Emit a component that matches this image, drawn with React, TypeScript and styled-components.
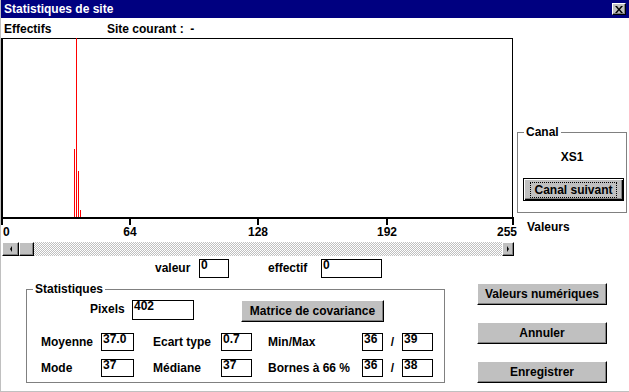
import React from 'react';
import styled, { createGlobalStyle } from 'styled-components';

const GlobalStyle = createGlobalStyle`
  html, body {
    margin: 0;
    padding: 0;
    background: #fff;
  }
  body {
    font-family: "Liberation Sans", Arial, sans-serif;
    font-size: 12px;
    font-weight: bold;
    color: #000;
  }
`;

const Window = styled.div`
  width: 629px;
  height: 392px;
  box-sizing: border-box;
  border-left: 1px solid #c0c0c0;
  border-bottom: 1px solid #c0c0c0;
  background: #fff;
  display: flex;
  flex-direction: column;
  overflow: hidden;
`;

const TitleBar = styled.div`
  height: 18px;
  flex: none;
  background: #000080;
  color: #fff;
  display: flex;
  align-items: center;
  justify-content: space-between;
  padding: 0 3px;
`;

const Title = styled.span`
  font-size: 12px;
  line-height: 14px;
`;

const CloseButton = styled.div`
  width: 14px;
  height: 12px;
  box-sizing: border-box;
  background: #c0c0c0;
  border: 1px solid;
  border-color: #fff #000 #000 #fff;
  box-shadow: inset -1px -1px #808080;
  display: flex;
  align-items: center;
  justify-content: center;
`;

const Header = styled.div`
  height: 20px;
  flex: none;
  box-sizing: border-box;
  padding: 4px 0 0 3px;
  line-height: 14px;
  display: flex;
  white-space: pre;
`;

const HeaderLabel = styled.span<{ $w?: number }>`
  width: ${p => (p.$w ? `${p.$w}px` : 'auto')};
`;

const Main = styled.div`
  height: 218px;
  flex: none;
  display: flex;
`;

const ChartCol = styled.div`
  width: 516px;
  display: flex;
  flex-direction: column;
`;

const ChartSvg = styled.svg`
  display: block;
  width: 516px;
  height: 204px;
  font-family: "Liberation Sans", Arial, sans-serif;
  font-size: 12px;
  font-weight: bold;
`;

const ScrollBar = styled.div`
  margin-left: 1px;
  width: 512px;
  height: 14px;
  display: flex;
  background: repeating-conic-gradient(#c0c0c0 0 25%, #fff 0 50%) 0 0 / 2px 2px;
`;

const ScrollPart = styled.div<{ $w: number; $push?: boolean }>`
  width: ${p => p.$w}px;
  height: 14px;
  box-sizing: border-box;
  background: #c0c0c0;
  border: 1px solid;
  border-color: #fff #000 #000 #fff;
  box-shadow: inset -1px -1px #808080;
  margin-left: ${p => (p.$push ? 'auto' : '0')};
  display: flex;
  align-items: center;
  justify-content: center;
`;

const Arrow = styled.span<{ $dir: 'left' | 'right' }>`
  width: 0;
  height: 0;
  border-top: 3px solid transparent;
  border-bottom: 3px solid transparent;
  ${p => (p.$dir === 'left' ? 'border-right: 2px solid #000;' : 'border-left: 2px solid #000;')}
`;

const SidePanel = styled.div`
  width: 110px;
  padding-top: 88px;
  display: flex;
  flex-direction: column;
`;

const GroupBox = styled.fieldset<{ $w: number; $ml?: number; $mt?: number }>`
  width: ${p => p.$w}px;
  box-sizing: border-box;
  margin: ${p => p.$mt ?? 0}px 0 0 ${p => p.$ml ?? 0}px;
  padding: 0;
  border: 1px solid #808080;
  min-width: 0;
`;

const GroupLabel = styled.legend`
  margin-left: 6px;
  padding: 0 2px;
  line-height: 12px;
  font-size: 12px;
`;

const CanalBody = styled.div`
  display: flex;
  flex-direction: column;
  padding: 12px 0 11px 5px;
`;

const ChannelName = styled.div`
  line-height: 14px;
  text-align: center;
  margin-left: -5px;
`;

const DefaultButton = styled.div`
  margin-top: 14px;
  width: 101px;
  height: 23px;
  box-sizing: border-box;
  background: #c0c0c0;
  border: 1px solid #000;
  box-shadow: inset 1px 1px #fff, inset -1px -1px #000, inset -2px -2px #808080;
  display: flex;
  align-items: center;
  justify-content: center;
`;

const FocusText = styled.span`
  outline: 1px dotted #000;
  outline-offset: 0;
  padding: 0 3px;
  line-height: 14px;
`;

const AxisName = styled.div`
  margin-top: 7px;
  padding-left: 10px;
  line-height: 14px;
`;

const Lower = styled.div`
  display: flex;
`;

const LeftLower = styled.div`
  width: 444px;
  display: flex;
  flex-direction: column;
`;

const ValueRow = styled.div`
  margin-top: 3px;
  height: 19px;
  display: flex;
`;

const Label = styled.span<{ $w: number; $ml?: number; $h: number }>`
  width: ${p => p.$w}px;
  margin-left: ${p => p.$ml ?? 0}px;
  line-height: ${p => p.$h}px;
  box-sizing: border-box;
  white-space: nowrap;
`;

const Field = styled.div<{ $w: number; $h: number; $ml?: number }>`
  width: ${p => p.$w}px;
  height: ${p => p.$h}px;
  margin-left: ${p => p.$ml ?? 0}px;
  box-sizing: border-box;
  border: 1px solid #000;
  background: #fff;
  padding: 0 1px;
  line-height: 11px;
  overflow: hidden;
`;

const StatsBody = styled.div`
  padding: 5px 0 5px 14px;
`;

const PixelsRow = styled.div`
  height: 22px;
  display: flex;
  align-items: flex-start;
`;

const Button = styled.div<{ $w: number; $ml?: number }>`
  width: ${p => p.$w}px;
  height: 22px;
  margin-left: ${p => p.$ml ?? 0}px;
  box-sizing: border-box;
  background: #c0c0c0;
  border: 1px solid;
  border-color: #fff #000 #000 #fff;
  box-shadow: inset -1px -1px #808080;
  line-height: 20px;
  text-align: center;
  white-space: nowrap;
`;

const StatsGrid = styled.div`
  margin-top: 11px;
  display: grid;
  grid-template-columns: 60px 33px 87px 31px 110px 21px 19px 31px;
  grid-auto-rows: 18px;
  row-gap: 8px;
`;

const GridLabel = styled.span<{ $pl?: number }>`
  padding-left: ${p => p.$pl ?? 0}px;
  line-height: 18px;
  white-space: nowrap;
`;

const Slash = styled.span`
  text-align: center;
  line-height: 18px;
`;

const ButtonCol = styled.div`
  margin: 27px 0 0 32px;
  display: flex;
  flex-direction: column;
  gap: 17px;
`;

const counts: Record<number, number> = { 36: 91, 37: 240, 38: 62, 39: 9 };
const maxCount = Math.max(...Object.values(counts));
const PLOT_H = 179;
const xFor = (v: number) => 1 + (v * 511) / 255;

const ticks = [
  { v: 0, x: 0, anchor: 'start', lx: 2 },
  { v: 64, x: 128, anchor: 'middle', lx: 129 },
  { v: 128, x: 256, anchor: 'middle', lx: 257 },
  { v: 192, x: 385, anchor: 'middle', lx: 386 },
  { v: 255, x: 511, anchor: 'end', lx: 516 },
];

const Histogram = () => (
  <ChartSvg viewBox="0 0 516 204">
    <rect x={0} y={0} width={512} height={1} fill="#000" />
    <rect x={0} y={0} width={2} height={187} fill="#000" />
    <rect x={511} y={0} width={1} height={179} fill="#000" />
    <rect x={0} y={179} width={513} height={2} fill="#000" />
    {ticks.map(t => (
      <g key={t.v}>
        <rect x={t.x} y={179} width={2} height={8} fill="#000" />
        <text x={t.lx} y={198} textAnchor={t.anchor as 'start' | 'middle' | 'end'} fill="#000">
          {t.v}
        </text>
      </g>
    ))}
    {Object.entries(counts).map(([v, n]) => {
      const h = Math.round((n / maxCount) * PLOT_H);
      return <rect key={v} x={Math.round(xFor(Number(v)))} y={179 - h} width={1} height={h} fill="#ff0000" />;
    })}
  </ChartSvg>
);

export default function App() {
  return (
    <>
      <GlobalStyle />
      <Window>
        <TitleBar>
          <Title>Statistiques de site</Title>
          <CloseButton>
            <svg width="8" height="7" viewBox="0 0 8 7">
              <path d="M0 0h2l2 2.5L6 0h2L5 3.5 8 7H6L4 4.5 2 7H0l3-3.5z" fill="#000" />
            </svg>
          </CloseButton>
        </TitleBar>
        <Header>
          <HeaderLabel $w={103}>Effectifs</HeaderLabel>
          <HeaderLabel>Site courant :  -</HeaderLabel>
        </Header>
        <Main>
          <ChartCol>
            <Histogram />
            <ScrollBar>
              <ScrollPart $w={17}><Arrow $dir="left" /></ScrollPart>
              <ScrollPart $w={15} />
              <ScrollPart $w={12} $push><Arrow $dir="right" /></ScrollPart>
            </ScrollBar>
          </ChartCol>
          <SidePanel>
            <GroupBox $w={110}>
              <GroupLabel>Canal</GroupLabel>
              <CanalBody>
                <ChannelName>XS1</ChannelName>
                <DefaultButton><FocusText>Canal suivant</FocusText></DefaultButton>
              </CanalBody>
            </GroupBox>
            <AxisName>Valeurs</AxisName>
          </SidePanel>
        </Main>
        <Lower>
          <LeftLower>
            <ValueRow>
              <Label $w={44} $ml={154} $h={19}>valeur</Label>
              <Field $w={30} $h={19}>0</Field>
              <Label $w={53} $ml={39} $h={19}>effectif</Label>
              <Field $w={61} $h={19}>0</Field>
            </ValueRow>
            <GroupBox $w={419} $ml={25} $mt={5}>
              <GroupLabel>Statistiques</GroupLabel>
              <StatsBody>
                <PixelsRow>
                  <Label $w={42} $ml={49} $h={19}>Pixels</Label>
                  <Field $w={62} $h={20}>402</Field>
                  <Button $w={143} $ml={47}>Matrice de covariance</Button>
                </PixelsRow>
                <StatsGrid>
                  <GridLabel>Moyenne</GridLabel>
                  <Field $w={33} $h={18}>37.0</Field>
                  <GridLabel $pl={19}>Ecart type</GridLabel>
                  <Field $w={31} $h={18}>0.7</Field>
                  <GridLabel $pl={16}>Min/Max</GridLabel>
                  <Field $w={21} $h={18}>36</Field>
                  <Slash>/</Slash>
                  <Field $w={31} $h={18}>39</Field>

                  <GridLabel>Mode</GridLabel>
                  <Field $w={33} $h={18}>37</Field>
                  <GridLabel $pl={19}>Médiane</GridLabel>
                  <Field $w={31} $h={18}>37</Field>
                  <GridLabel $pl={16}>Bornes à 66 %</GridLabel>
                  <Field $w={21} $h={18}>36</Field>
                  <Slash>/</Slash>
                  <Field $w={31} $h={18}>38</Field>
                </StatsGrid>
              </StatsBody>
            </GroupBox>
          </LeftLower>
          <ButtonCol>
            <Button $w={130}>Valeurs numériques</Button>
            <Button $w={130}>Annuler</Button>
            <Button $w={130}>Enregistrer</Button>
          </ButtonCol>
        </Lower>
      </Window>
    </>
  );
}
